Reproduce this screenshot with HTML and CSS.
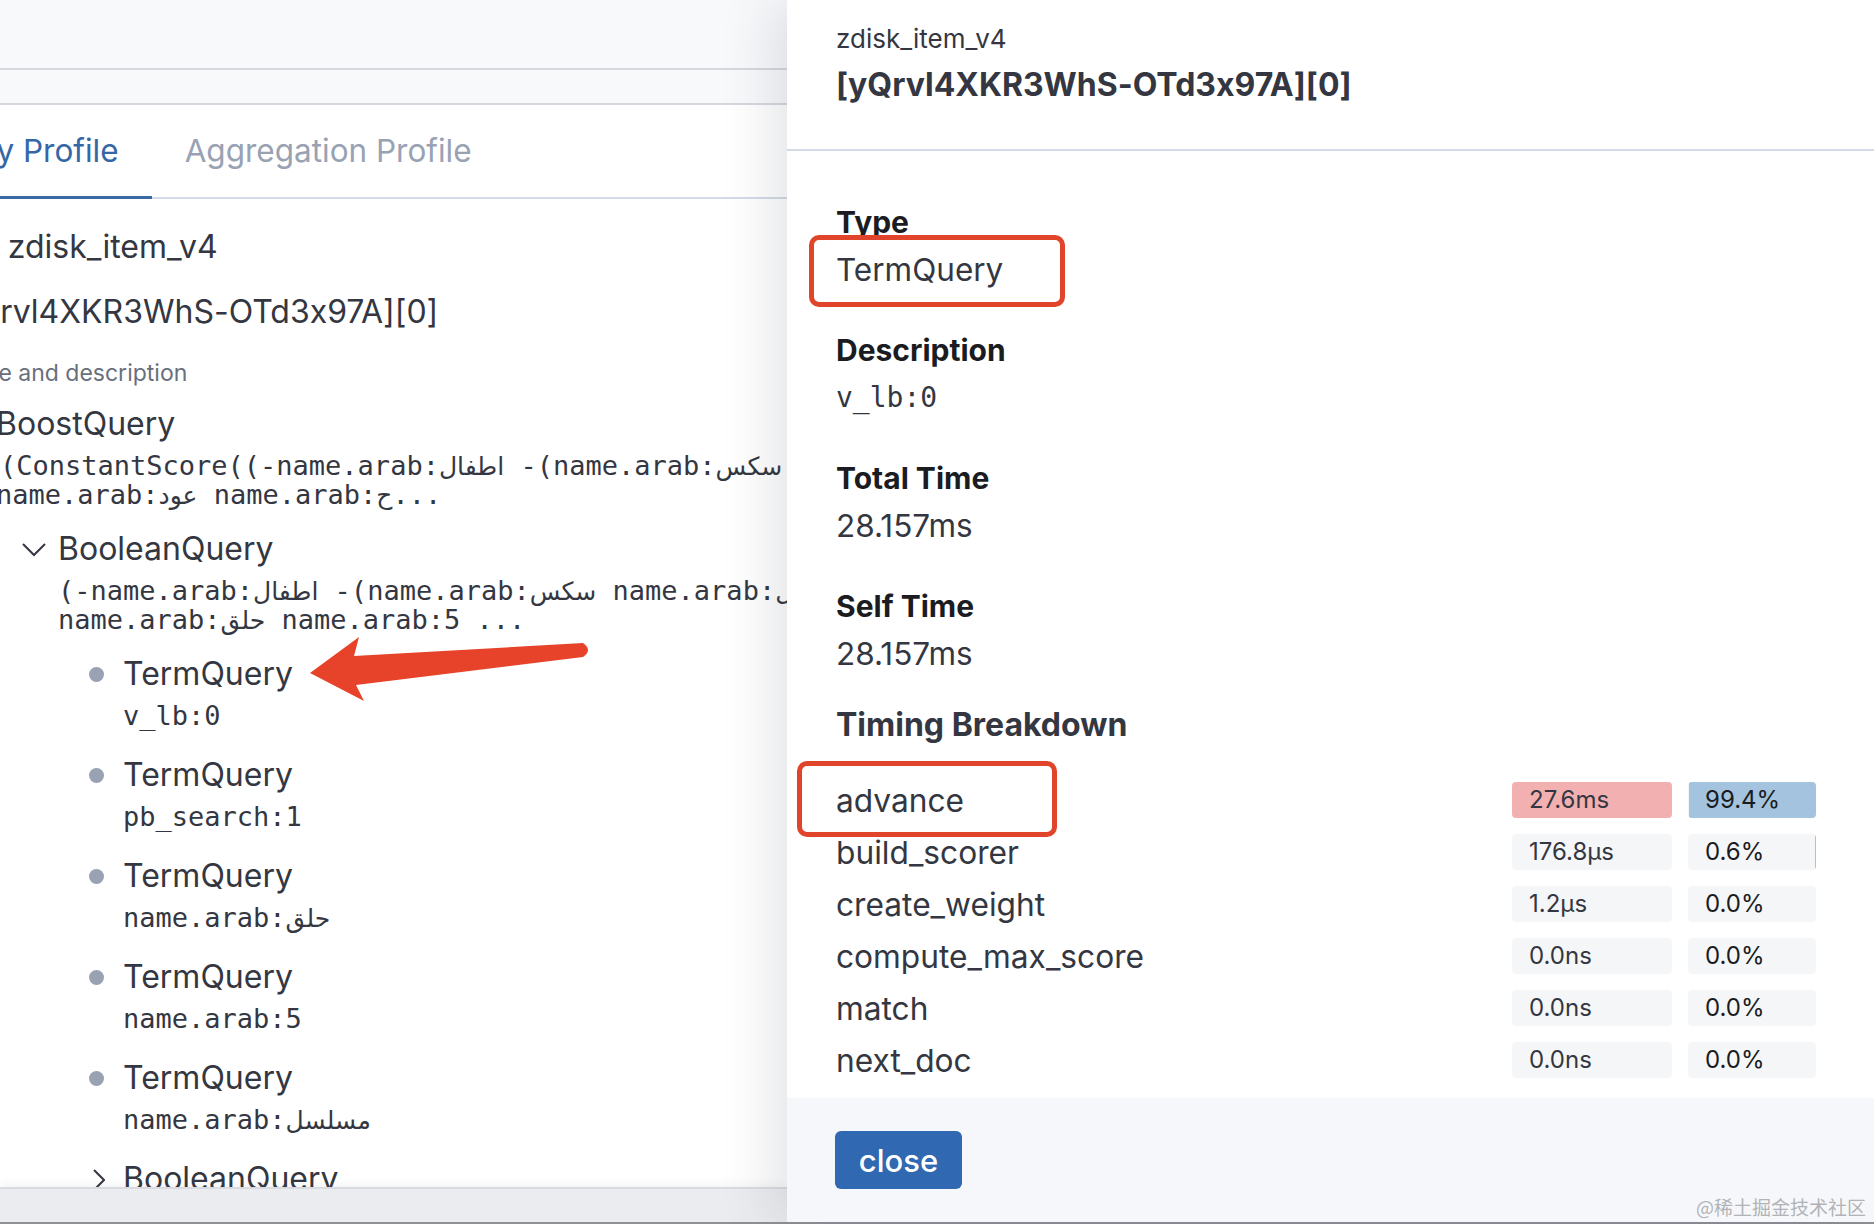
FILE: index.html
```html
<!DOCTYPE html>
<html lang="en">
<head>
<meta charset="UTF-8" />
<meta name="viewport" content="width=device-width, initial-scale=1" />
<title>Search Profiler</title>
<link rel="stylesheet" href="styles.css">
</head>
<body>

<div class="app">

  <!-- background page: the profile tree, partly hidden under the flyout -->
  <div class="page">
    <div class="top-bar"></div>
    <div class="sub-bar"></div>

    <div class="tabs">
      <div class="tab active">Query Profile</div>
      <div class="tab">Aggregation Profile</div>
    </div>

    <div class="profile">
      <div class="index-line">Index: zdisk_item_v4</div>
      <div class="shard-line">[yQrvl4XKR3WhS-OTd3x97A][0]</div>
      <div class="col-head">Type and description</div>

      <div class="node depth0">
        <div class="node-name">BoostQuery</div>
        <div class="node-desc">
          <span>(ConstantScore((-name.arab:<span class="ar">اطفال</span> -(name.arab:<span class="ar">سكس</span></span>
          <span>name.arab:<span class="ar">عود</span> name.arab:<span class="ar">ح</span>...</span>
        </div>

        <div class="node depth1">
          <div class="node-name">
            <svg class="chev" width="24" height="14" viewBox="0 0 24 14"><polyline points="1,1 12,12 23,1" /></svg>
            BooleanQuery
          </div>
          <div class="node-desc">
            <span>(-name.arab:<span class="ar">اطفال</span> -(name.arab:<span class="ar">سكس</span> name.arab:<span class="ar">طفل</span></span>
            <span>name.arab:<span class="ar">حلق</span> name.arab:5 ...</span>
          </div>

          <div class="children">
            <div class="node leaf">
              <div class="node-name"><span class="dot"></span>TermQuery</div>
              <div class="node-desc"><span>v_lb:0</span></div>
            </div>
            <div class="node leaf">
              <div class="node-name"><span class="dot"></span>TermQuery</div>
              <div class="node-desc"><span>pb_search:1</span></div>
            </div>
            <div class="node leaf">
              <div class="node-name"><span class="dot"></span>TermQuery</div>
              <div class="node-desc"><span>name.arab:<span class="ar">حلق</span></span></div>
            </div>
            <div class="node leaf">
              <div class="node-name"><span class="dot"></span>TermQuery</div>
              <div class="node-desc"><span>name.arab:5</span></div>
            </div>
            <div class="node leaf">
              <div class="node-name"><span class="dot"></span>TermQuery</div>
              <div class="node-desc"><span>name.arab:<span class="ar">مسلسل</span></span></div>
            </div>
            <div class="node leaf">
              <div class="node-name">
                <svg class="chev-right" width="12" height="22" viewBox="0 0 12 22"><polyline points="1,1 11,11 1,21" /></svg>
                BooleanQuery
              </div>
            </div>
          </div>
        </div>
      </div>
    </div>

    <div class="bottom-bar"></div>

    <!-- annotation arrow drawn over the tree -->
    <svg class="arrow" width="787" height="1224" viewBox="0 0 787 1224">
      <path d="M310,673 L359,637 L354,656 L583,643 Q593,650 583,657 L356,685 L364,701 Z" />
    </svg>
  </div>

  <!-- flyout with the details of the selected node -->
  <div class="flyout">
    <div class="flyout-header">
      <div class="fh-index">zdisk_item_v4</div>
      <div class="fh-shard">[yQrvl4XKR3WhS-OTd3x97A][0]</div>
    </div>

    <div class="flyout-body">
      <div class="field">
        <div class="field-title">Type</div>
        <div class="field-value">TermQuery</div>
      </div>
      <div class="field">
        <div class="field-title">Description</div>
        <div class="field-value mono">v_lb:0</div>
      </div>
      <div class="field">
        <div class="field-title">Total Time</div>
        <div class="field-value">28.157ms</div>
      </div>
      <div class="field">
        <div class="field-title">Self Time</div>
        <div class="field-value">28.157ms</div>
      </div>

      <div class="breakdown-title">Timing Breakdown</div>
      <div class="breakdown">
        <div class="bd-row">
          <div class="bd-name">advance</div>
          <div class="badge time hot">27.6ms</div>
          <div class="badge pct" style="--pct: 99.4%">99.4%</div>
        </div>
        <div class="bd-row">
          <div class="bd-name">build_scorer</div>
          <div class="badge time">176.8µs</div>
          <div class="badge pct" style="--pct: 0.6%">0.6%</div>
        </div>
        <div class="bd-row">
          <div class="bd-name">create_weight</div>
          <div class="badge time">1.2µs</div>
          <div class="badge pct" style="--pct: 0%">0.0%</div>
        </div>
        <div class="bd-row">
          <div class="bd-name">compute_max_score</div>
          <div class="badge time">0.0ns</div>
          <div class="badge pct" style="--pct: 0%">0.0%</div>
        </div>
        <div class="bd-row">
          <div class="bd-name">match</div>
          <div class="badge time">0.0ns</div>
          <div class="badge pct" style="--pct: 0%">0.0%</div>
        </div>
        <div class="bd-row">
          <div class="bd-name">next_doc</div>
          <div class="badge time">0.0ns</div>
          <div class="badge pct" style="--pct: 0%">0.0%</div>
        </div>
      </div>
    </div>

    <div class="flyout-footer">
      <button class="btn-close">close</button>
    </div>

    <!-- red annotation boxes -->
    <div class="mark mark-type"></div>
    <div class="mark mark-advance"></div>
  </div>

</div>

<div class="watermark">@稀土掘金技术社区</div>

</body>
</html>
```

FILE: styles.css
```css
body {
  margin: 0; width: 1874px; height: 1224px; overflow: hidden;
  background: #8e9096; font-family: Inter, "Noto Sans", sans-serif; color: #343741;
  font-feature-settings: "calt" 0; position: relative;
}
.app { display: flex; height: 1222px; background: #fff; }

/* left page */
.page {
  width: 787px; flex: none; position: relative; overflow: hidden;
  display: flex; flex-direction: column;
}
.top-bar { height: 68px; flex: none; background: #f8f9fb; border-bottom: 2px solid #d5d8de; }
.sub-bar { height: 33px; flex: none; background: #f8f9fb; border-bottom: 2px solid #d5d8de; }
.tabs {
  display: flex; height: 92px; flex: none; border-bottom: 2px solid #d3dae6;
  margin-left: -110px;
}
.tab {
  padding: 0 33px; font-size: 31.5px; line-height: 92px; color: #98a2b3;
  margin-bottom: -2px; border-bottom: 3px solid transparent; height: 91px;
}
.tab.active { color: #3567a6; border-bottom-color: #3a69a5; }

.profile { flex: 1; overflow: hidden; padding-top: 28px; font-size: 32px; }
.index-line { line-height: 40px; margin-left: -93px; white-space: nowrap; }
.shard-line { line-height: 40px; margin-top: 25px; margin-left: -54px; white-space: nowrap; }
.col-head { font-size: 23px; line-height: 30px; margin-top: 26px; margin-left: -42px; color: #69707d; white-space: nowrap; }

.node { margin-top: 20px; }
.node.depth0 { margin-top: 16px; margin-left: -4px; }
.node.depth1 { margin-left: 62px; }
.node.leaf { margin-left: 65px; }
.node-name { position: relative; line-height: 40px; height: 40px; white-space: nowrap; color: #343741; }
.node-desc {
  margin-top: 7px; font-family: "DejaVu Sans Mono", monospace; font-size: 27px;
  line-height: 29px; color: #343741; white-space: nowrap;
}
.node-desc > span { display: block; height: 29px; }
.depth0 > .node-desc > span:first-child { margin-left: 4px; }
.ar { font-family: "DejaVu Sans", sans-serif; font-size: 25px; line-height: 1; }
.children { display: flex; flex-direction: column; gap: 5px; }

.chev { position: absolute; left: -36px; top: 14px; fill: none; stroke: #343741; stroke-width: 2; }
.chev-right { position: absolute; left: -30px; top: 10px; fill: none; stroke: #343741; stroke-width: 2; }
.dot {
  position: absolute; left: -34px; top: 13px; width: 15px; height: 15px;
  border-radius: 50%; background: #98a2b3;
}

.bottom-bar {
  height: 33px; flex: none; background: #ebecef; border-top: 2px solid #d9dbe0;
  box-shadow: 0 -4px 8px rgba(0,0,0,0.04);
}

.arrow { position: absolute; left: 0; top: 0; pointer-events: none; }
.arrow path { fill: #e6432a; }

/* flyout */
.flyout {
  flex: 1; position: relative; display: flex; flex-direction: column;
  box-shadow: -14px 0 50px rgba(60,66,80,0.14); background: #fff; z-index: 1;
}
.flyout-header { padding: 23px 49px 44px; border-bottom: 2px solid #d3dae6; }
.fh-index { font-size: 26px; line-height: 32px; color: #343741; }
.fh-shard { font-size: 32px; line-height: 40px; margin-top: 10px; font-weight: 700; color: #343741; }

.flyout-body { flex: 1; padding: 51px 58px 0 49px; }
.field { margin-bottom: 40px; }
.field-title { font-size: 30px; line-height: 40px; font-weight: 700; color: #1a1c21; }
.field-value { font-size: 31.5px; line-height: 40px; margin-top: 8px; color: #343741; }
.field-value.mono { font-family: "DejaVu Sans Mono", monospace; font-size: 28px; }

.breakdown-title { font-size: 32px; line-height: 40px; font-weight: 700; color: #343741; margin-top: -9px; }
.breakdown { margin-top: 29px; }
.bd-row { display: flex; align-items: center; gap: 16px; height: 52px; }
.bd-name { flex: 1; font-size: 31.7px; color: #343741; }
.badge {
  height: 36px; line-height: 36px; padding: 0 17px; font-size: 24px;
  border-radius: 4px; background: #f5f6f8; box-sizing: border-box;
}
.badge.time { width: 160px; color: #343741; }
.badge.time.hot { background: #f3b0b1; }
.badge.pct {
  width: 128px; color: #1a1c21;
  background: linear-gradient(to left, #a4c3df var(--pct), #f5f6f8 var(--pct));
}

.flyout-footer { height: 124px; flex: none; background: #f5f7fa; padding: 33px 0 0 48px; box-sizing: border-box; }
.btn-close {
  width: 127px; height: 58px; border: none; border-radius: 6px; background: #3068b1;
  color: #fff; font-family: Inter, sans-serif; font-size: 31px; font-weight: 500;
}

.mark { position: absolute; border: 5px solid #e0442b; border-radius: 10px; pointer-events: none; }
.mark-type { left: 22px; top: 235px; width: 246px; height: 62px; }
.mark-advance { left: 10px; top: 761px; width: 250px; height: 66px; }

.watermark {
  position: absolute; right: 8px; bottom: 4px; font-size: 19px; z-index: 2;
  font-family: "Noto Sans CJK SC", sans-serif; color: rgba(160,160,165,0.8);
}
```
